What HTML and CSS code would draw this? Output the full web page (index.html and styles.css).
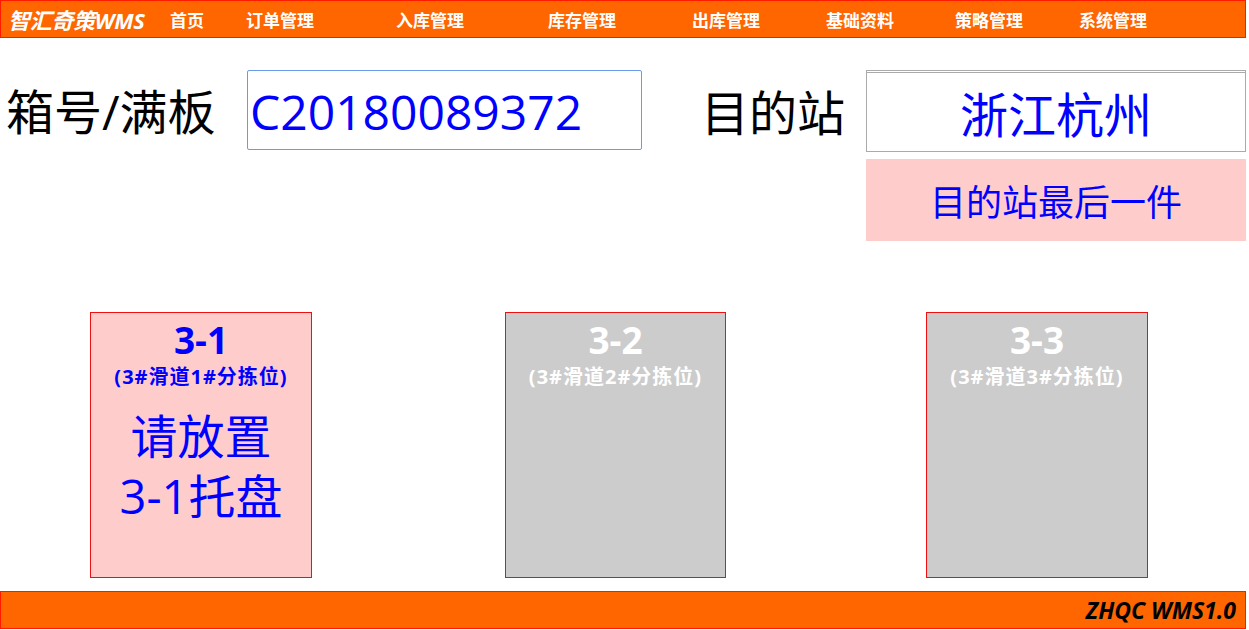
FILE: index.html
```html
<!DOCTYPE html>
<html lang="zh-CN">
<head>
<meta charset="utf-8">
<title>智汇奇策WMS</title>
<link rel="stylesheet" href="styles.css">
</head>
<body>
<div class="page">
  <header class="topbar">
    <div class="brand">智汇奇策WMS</div>
    <nav class="nav">
      <span class="nav-item">首页</span>
      <span class="nav-item">订单管理</span>
      <span class="nav-item">入库管理</span>
      <span class="nav-item">库存管理</span>
      <span class="nav-item">出库管理</span>
      <span class="nav-item">基础资料</span>
      <span class="nav-item">策略管理</span>
      <span class="nav-item">系统管理</span>
    </nav>
  </header>

  <section class="scan">
    <div class="field">
      <div class="label label-box">箱号/满板</div>
      <div class="code-input">C20180089372</div>
    </div>
    <div class="dest">
      <div class="label">目的站</div>
      <div class="dest-col">
        <div class="dest-box">浙江杭州</div>
        <div class="dest-note">目的站最后一件</div>
      </div>
    </div>
  </section>

  <section class="slots">
    <div class="slot slot-active">
      <div class="slot-no">3-1</div>
      <div class="slot-desc">(3#滑道1#分拣位)</div>
      <div class="slot-msg">请放置<br>3-1托盘</div>
    </div>
    <div class="slot slot-idle slot-mid">
      <div class="slot-no">3-2</div>
      <div class="slot-desc">(3#滑道2#分拣位)</div>
    </div>
    <div class="slot slot-idle slot-last">
      <div class="slot-no">3-3</div>
      <div class="slot-desc">(3#滑道3#分拣位)</div>
    </div>
  </section>

  <footer class="footbar">ZHQC WMS1.0</footer>
</div>
</body>
</html>
```

FILE: styles.css
```css
* { box-sizing: border-box; }

body {
  margin: 0;
  background: #fff;
  font-family: "Open Sans", "Noto Sans CJK SC", sans-serif;
}

.page {
  width: 1246px;
}

.topbar {
  height: 38px;
  background: #ff6600;
  border: 1px solid #ff1a00;
  display: flex;
  align-items: center;
  color: #fff;
}

.brand {
  width: 169px;
  padding-left: 7px;
  font-size: 22px;
  font-weight: bold;
  font-style: italic;
  white-space: nowrap;
  letter-spacing: -0.3px;
}

.nav {
  display: flex;
  align-items: center;
}

.nav-item {
  font-size: 17px;
  font-weight: bold;
  white-space: nowrap;
}

.nav-item:nth-child(1) { width: 76px; }
.nav-item:nth-child(2) { width: 150px; }
.nav-item:nth-child(3) { width: 152px; }
.nav-item:nth-child(4) { width: 144px; }
.nav-item:nth-child(5) { width: 134px; }
.nav-item:nth-child(6) { width: 129px; }
.nav-item:nth-child(7) { width: 124px; }

.scan {
  display: flex;
  padding: 32px 0 0 6px;
}

.field {
  display: flex;
  align-items: center;
  height: 80px;
}

.label {
  font-size: 48px;
  color: #000;
  white-space: nowrap;
  line-height: 1;
  padding-top: 4px;
}

.label-box {
  width: 241px;
}

.code-input {
  width: 395px;
  height: 80px;
  border: 1px solid #6a9ae8;
  border-radius: 2px;
  color: #0000ff;
  font-size: 48px;
  display: flex;
  align-items: center;
  padding: 2px 0 0 2px;
}

.dest {
  margin-left: auto;
  display: flex;
  align-items: flex-start;
}

.dest .label {
  height: 82px;
  display: flex;
  align-items: center;
  margin-right: 21px;
}

.dest-col {
  width: 380px;
  display: flex;
  flex-direction: column;
  gap: 7px;
}

.dest-box {
  height: 82px;
  border: 1px solid #aaa;
  border-top: 3px double #aaa;
  color: #0000ff;
  font-size: 48px;
  display: flex;
  align-items: center;
  justify-content: center;
}

.dest-note {
  height: 82px;
  background: #ffcccc;
  color: #0000ff;
  font-size: 36px;
  display: flex;
  align-items: center;
  justify-content: center;
}

.slots {
  display: flex;
  margin-top: 71px;
  padding-left: 90px;
}

.slot {
  width: 222px;
  height: 266px;
  border: 1px solid #ee1111;
  display: flex;
  flex-direction: column;
  align-items: center;
  text-align: center;
  padding-top: 5px;
}

.slot-mid { margin-left: 193px; width: 221px; }
.slot-last { margin-left: 200px; }

.slot-active {
  background: #ffcccc;
  color: #0000ff;
}

.slot-idle {
  background: #cccccc;
  color: #ffffff;
}

.slot-no {
  font-size: 37px;
  font-weight: bold;
  line-height: 44px;
}

.slot-desc {
  font-size: 20px;
  font-weight: bold;
  line-height: 30px;
  letter-spacing: 1px;
}

.slot-msg {
  margin-top: 14px;
  font-size: 47px;
  line-height: 60px;
}

.footbar {
  margin-top: 13px;
  height: 38px;
  background: #ff6600;
  border: 1px solid #ff1a00;
  display: flex;
  align-items: center;
  justify-content: flex-end;
  padding-right: 9px;
  font-size: 23px;
  font-weight: bold;
  font-style: italic;
  color: #000;
}
```
